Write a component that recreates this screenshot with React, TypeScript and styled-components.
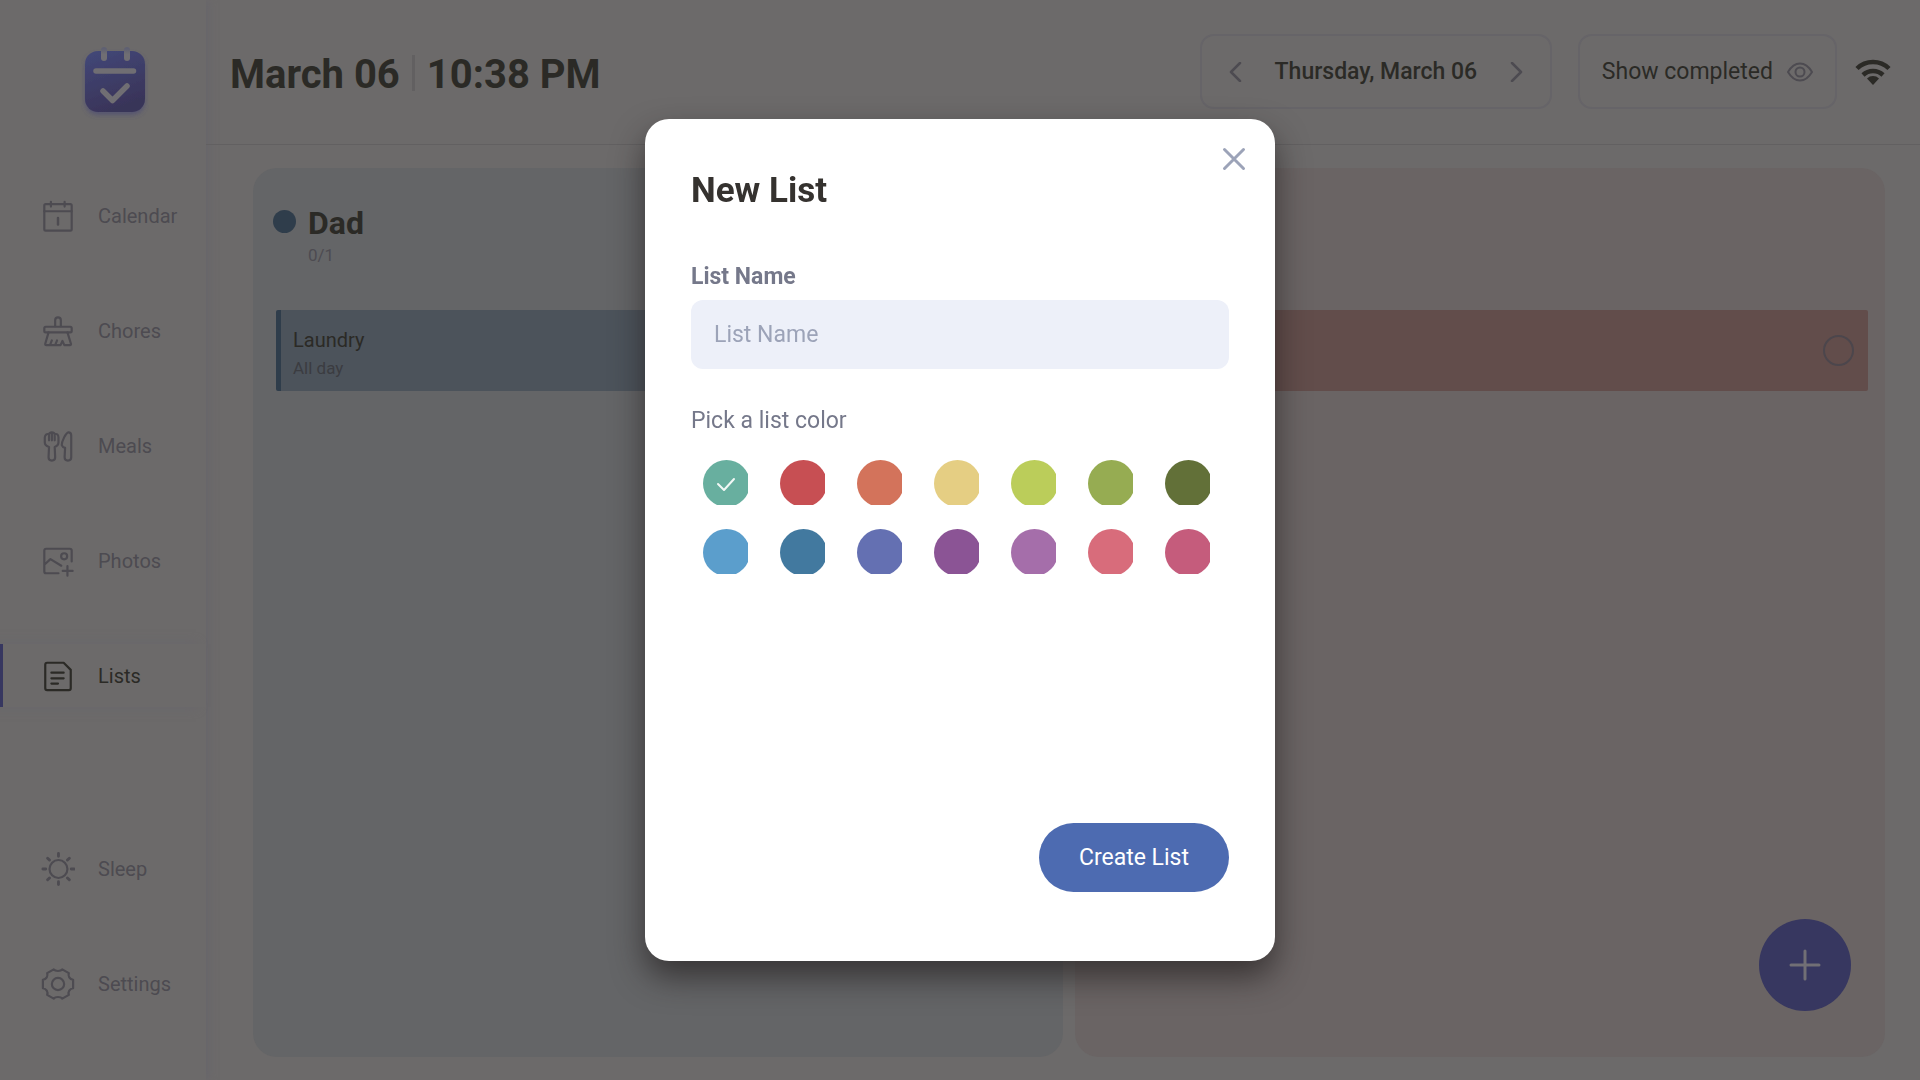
import React, { useState } from "react";
import styled, { createGlobalStyle } from "styled-components";

const color = {
  page: "#6c6a6a",
  line: "#626061",
  ink: "#2b2a26",
  muted: "#4d4b51",
  navy: "#373760",
};

const GlobalStyle = createGlobalStyle`
  *, *::before, *::after { box-sizing: border-box; }
  html, body, #root { height: 100%; }
  body {
    margin: 0;
    background: ${color.page};
    color: ${color.ink};
    font-family: Roboto, "Liberation Sans", sans-serif;
    overflow: hidden;
  }
  button, input { font: inherit; color: inherit; }
  button { border: 0; padding: 0; background: none; cursor: pointer; }
  h1, h2, h3, p, ul { margin: 0; padding: 0; }
  ul { list-style: none; }
`;

const Shell = styled.div`
  display: flex;
  height: 100%;
`;

const Sidebar = styled.nav`
  display: flex;
  flex-direction: column;
  flex: none;
  width: 206px;
  padding-bottom: 65px;
  box-shadow: 2px 0 8px #67656b;
`;

const LogoBox = styled.div`
  display: flex;
  justify-content: center;
  padding: 44px 0 0 24px;
  height: 184px;
`;

const NavList = styled.ul<{ $end?: boolean }>`
  display: flex;
  flex-direction: column;
  gap: 52px;
  margin-top: ${(p) => (p.$end ? "auto" : "0")};
`;

const NavLink = styled.a<{ $active?: boolean }>`
  display: flex;
  align-items: center;
  gap: 23px;
  height: 63px;
  padding-left: 38px;
  border-left: 3px solid ${(p) => (p.$active ? color.navy : "transparent")};
  box-shadow: ${(p) => (p.$active ? "-10px 0 10px #68666c" : "none")};
  color: ${(p) => (p.$active ? color.ink : color.muted)};
  font-size: 20px;
  line-height: 24px;
  text-decoration: none;

  svg { flex: none; }
`;

const Main = styled.main`
  display: flex;
  flex-direction: column;
  flex: 1;
  min-width: 0;
`;

const Header = styled.header`
  display: flex;
  align-items: center;
  justify-content: space-between;
  height: 145px;
  padding: 0 29px 1px 24px;
  border-bottom: 1px solid ${color.line};
`;

const Clock = styled.h1`
  display: flex;
  align-items: center;
  gap: 12px;
  font-size: 40px;
  line-height: 48px;
  font-weight: 700;
  padding-top: 6px;
`;

const ClockRule = styled.span`
  width: 3px;
  height: 36px;
  margin-bottom: 4px;
  background: #626061;
`;

const Tools = styled.div`
  display: flex;
  align-items: center;
  gap: 26px;
`;

const ToolBox = styled.div`
  display: flex;
  align-items: center;
  justify-content: space-between;
  width: 352px;
  height: 75px;
  padding: 0 24px;
  border: 2px solid #666468;
  border-radius: 14px;
  font-size: 23px;
  line-height: 28px;
  font-weight: 500;
`;

const ArrowButton = styled.button`
  display: flex;
  color: ${color.muted};
`;

const ToggleButton = styled.button`
  display: flex;
  align-items: center;
  gap: 14px;
  height: 75px;
  padding: 0 22px;
  border: 2px solid #666468;
  border-radius: 14px;
  font-size: 23px;
  line-height: 28px;

  svg { color: ${color.muted}; }
`;

const Network = styled.div`
  display: flex;
  margin-left: -8px;
`;

const Board = styled.div`
  display: grid;
  grid-template-columns: 1fr 1fr;
  gap: 12px;
  flex: 1;
  padding: 23px 35px 23px 47px;
`;

const Column = styled.section<{ $bg: string }>`
  padding: 36px 17px 0 20px;
  border-radius: 24px;
  background: ${(p) => p.$bg};
`;

const ColumnHead = styled.div`
  display: grid;
  grid-template-columns: 23px 1fr;
  column-gap: 12px;
  align-items: center;
  height: 106px;
  align-content: start;
`;

const Dot = styled.span<{ $bg: string }>`
  width: 23px;
  height: 23px;
  margin-bottom: 4px;
  border-radius: 50%;
  background: ${(p) => p.$bg};
`;

const ColumnTitle = styled.h2`
  font-size: 32px;
  line-height: 38px;
  font-weight: 700;
`;

const Count = styled.p`
  grid-column: 2;
  color: ${color.muted};
  font-size: 17px;
  line-height: 26px;
`;

const Task = styled.article<{ $bg: string; $edge: string }>`
  display: flex;
  align-items: center;
  justify-content: space-between;
  height: 81px;
  margin-left: 3px;
  padding: 0 14px 0 12px;
  border-left: 5px solid ${(p) => p.$edge};
  border-radius: 2px;
  background: ${(p) => p.$bg};
`;

const TaskText = styled.div`
  padding-top: 6px;
`;

const TaskName = styled.h3`
  font-size: 20px;
  line-height: 28px;
  font-weight: 400;
`;

const TaskTime = styled.p`
  color: #3b3c41;
  font-size: 17px;
  line-height: 28px;
`;

const DoneBox = styled.input`
  appearance: none;
  width: 31px;
  height: 31px;
  margin: 0;
  border: 2px solid #4c464c;
  border-radius: 50%;
`;

const AddButton = styled.button`
  position: fixed;
  right: 69px;
  bottom: 69px;
  display: flex;
  align-items: center;
  justify-content: center;
  width: 92px;
  height: 92px;
  border-radius: 50%;
  background: ${color.navy};
  color: #716f75;
`;

const Layer = styled.div`
  position: fixed;
  inset: 0;
  display: flex;
  align-items: center;
  justify-content: center;
`;

const Dialog = styled.form`
  position: relative;
  display: flex;
  flex-direction: column;
  width: 630px;
  min-height: 842px;
  padding: 51px 46px 69px;
  border-radius: 24px;
  background: #fff;
  box-shadow: 0 16px 32px 0 rgba(30, 26, 26, 0.65);
`;

const CloseButton = styled.button`
  position: absolute;
  top: 25px;
  right: 26px;
  display: flex;
  color: #9ca3b8;
`;

const DialogTitle = styled.h2`
  color: #35322f;
  font-size: 35px;
  line-height: 42px;
  font-weight: 700;
`;

const FieldLabel = styled.label`
  margin-top: 50px;
  color: #75788a;
  font-size: 23px;
  line-height: 30px;
  font-weight: 700;
`;

const TextField = styled.input`
  height: 69px;
  margin-top: 8px;
  padding: 0 23px;
  border: 0;
  border-radius: 12px;
  background: #edf0f9;
  color: #35322f;
  font-size: 23px;
  line-height: 28px;
  outline: none;

  &::placeholder { color: #9ca3b8; opacity: 1; }
`;

const Swatches = styled.fieldset`
  min-width: 0;
  margin: 37px 0 0;
  padding: 0;
  border: 0;
`;

const SwatchLegend = styled.legend`
  padding: 0;
  color: #75788a;
  font-size: 23px;
  line-height: 30px;
`;

const SwatchGrid = styled.div`
  display: grid;
  grid-template-columns: repeat(7, 45px);
  gap: 24px 32px;
  padding: 24px 0 0 12px;
`;

const Swatch = styled.label<{ $bg: string }>`
  display: grid;
  grid-template: 45px / 45px;
  overflow: hidden;
  color: #f2f8f6;
  cursor: pointer;

  input {
    grid-area: 1 / 1;
    appearance: none;
    width: 47px;
    height: 47px;
    margin: 0;
    border-radius: 50%;
    background: ${(p) => p.$bg};
  }
  svg { grid-area: 1 / 1; place-self: center; z-index: 1; }
`;

const SubmitButton = styled.button`
  align-self: flex-end;
  height: 69px;
  margin-top: auto;
  padding: 0 40px;
  border-radius: 35px;
  background: #4d6bb1;
  color: #fff;
  font-size: 23px;
  line-height: 28px;
`;

const Svg = ({ size = 36, sw = 2, box = 36, children }: { size?: number; sw?: number; box?: number; children: React.ReactNode }) => (
  <svg width={size} height={size} viewBox={`0 0 ${box} ${box}`} fill="none" stroke="currentColor" strokeWidth={sw} strokeLinecap="round" strokeLinejoin="round" aria-hidden="true">
    {children}
  </svg>
);

const icons = {
  calendar: (
    <>
      <rect x="3.5" y="5.5" width="29" height="28" rx="1.5" />
      <path d="M3.5 13H32.5M10.5 3v5M25 3v5" />
      <path d="M18 20v7" strokeWidth="2.6" />
    </>
  ),
  chores: (
    <>
      <path d="M15 13V6.5a3 3 0 0 1 6 0V13" />
      <rect x="3.500" y="13.500" width="29" height="6" rx="1.5" />
      <path d="M8 19.500L4.500 31.500q-.4 1.500 1.200 1.500h15l2-4.500 2 4.500h5.800q1.600 0 1.200-1.500L28 19.500M9.500 33l2-5M15 33l2-5" />
    </>
  ),
  meals: (
    <>
      <path d="M8.500 12V5.500Q4.500 4.500 4 9v5q0 3.500 4.500 5L8 30q0 3.500 3.500 3.500T15 30l-.5-11q4-1.500 4-5V9q-.2-4.500-4-3.500V12M11.500 12V5M8.500 5.500Q9 3.500 11.500 3.500t3 2" />
      <path d="M32 7Q32 3.500 29 3.500C26 4.500 22 13 22 17q1 2.500 3.500 3L25 30q0 3.500 3.500 3.500T32 30z" />
    </>
  ),
  photos: (
    <>
      <path d="M18.500 31H5.500q-2 0-2-2V7q0-2 2-2h25q2 0 2 2v11.500M3.500 22L10 16l11.500 7" />
      <circle cx="24.500" cy="13" r="3.200" />
      <path d="M28 23.500v10M23 28.500h10.500" />
    </>
  ),
  lists: (
    <>
      <path d="M6.500 4H24l7.500 7.500V31q0 2-2 2h-23q-2 0-2-2V6q0-2 2-2z" />
      <path d="M11 14.500h13M11 20.500h13M11 26h7" />
    </>
  ),
  sleep: (
    <>
      <circle cx="18.500" cy="18" r="9.500" />
      <path strokeWidth="3" d="M18.500 1.500v3M18.500 31.500v3M2 18h3M32 18h3M7 6.500l2 2M28 27.500l2 2M7 29.500l2-2M28 8.500l2-2" />
    </>
  ),
  settings: (
    <>
      <circle cx="18" cy="18" r="6.500" />
      <path d="M13.500 2.500c1.500 2.300 7.500 2.300 9 0l7 4c-1.200 3 .8 6.500 4.500 7v9c-3.700.5-5.700 4-4.500 7l-7 4c-1.500-2.300-7.500-2.300-9 0l-7-4c1.200-3-.8-6.500-4.500-7v-9c3.700-.5 5.700-4 4.500-7z" />
    </>
  ),
};

type IconName = keyof typeof icons;

const mainNav: { id: IconName; label: string }[] = [
  { id: "calendar", label: "Calendar" },
  { id: "chores", label: "Chores" },
  { id: "meals", label: "Meals" },
  { id: "photos", label: "Photos" },
  { id: "lists", label: "Lists" },
];

const systemNav: { id: IconName; label: string }[] = [
  { id: "sleep", label: "Sleep" },
  { id: "settings", label: "Settings" },
];

const palette = [
  ["Teal", "#68af9f"], ["Red", "#c74f53"], ["Orange", "#d3735b"], ["Yellow", "#e5ce83"],
  ["Lime", "#bbcd5a"], ["Green", "#96ac52"], ["Olive", "#627038"], ["Sky", "#5b9ecc"],
  ["Blue", "#42799f"], ["Indigo", "#6470b2"], ["Purple", "#8b5495"], ["Orchid", "#a56eaa"],
  ["Coral", "#d86c7b"], ["Rose", "#c55c7c"],
];

const Logo = () => (
  <svg width="68" height="80" viewBox="0 0 68 80" fill="none" strokeLinecap="round" strokeLinejoin="round" role="img" aria-label="Family calendar">
    <defs>
      <linearGradient id="logo-fill" x1="0" y1="0" x2=".35" y2="1">
        <stop offset="0" stopColor="#434879" />
        <stop offset="1" stopColor="#393459" />
      </linearGradient>
      <linearGradient id="logo-ring" x1="0" y1="2" x2="0" y2="16" gradientUnits="userSpaceOnUse">
        <stop offset="0.2" stopColor="#5f6072" />
        <stop offset="0.6" stopColor="#706e73" />
      </linearGradient>
      <filter id="logo-glow" x="-20%" y="-20%" width="140%" height="150%">
        <feDropShadow dx="0" dy="3" stdDeviation="2.5" floodColor="#454575" floodOpacity=".6" />
      </filter>
    </defs>
    <rect x="4" y="7" width="60" height="61" rx="13" fill="url(#logo-fill)" filter="url(#logo-glow)" />
    <rect x="20" y="3" width="6" height="14" rx="3" fill="url(#logo-ring)" />
    <rect x="43" y="3" width="6" height="14" rx="3" fill="url(#logo-ring)" />
    <g stroke="#706e73" strokeWidth="5.5">
      <path d="M15 27h37.5" />
      <path d="M22 47l9.500 9.500L46 42" />
    </g>
  </svg>
);

const Nav = ({ items, end }: { items: typeof mainNav; end?: boolean }) => (
  <NavList $end={end}>
    {items.map((item) => (
      <li key={item.id}>
        <NavLink href={`#${item.id}`} $active={item.id === "lists"}>
          <Svg size={34} sw={2.3}>{icons[item.id]}</Svg>
          {item.label}
        </NavLink>
      </li>
    ))}
  </NavList>
);

export default function App() {
  const [picked, setPicked] = useState("Teal");
  const [name, setName] = useState("");

  return (
    <>
      <GlobalStyle />
      <Shell>
        <Sidebar>
          <LogoBox><Logo /></LogoBox>
          <Nav items={mainNav} />
          <Nav items={systemNav} end />
        </Sidebar>
        <Main>
          <Header>
            <Clock>
              <span>March 06</span>
              <ClockRule />
              <span>10:38 PM</span>
            </Clock>
            <Tools>
              <ToolBox>
                <ArrowButton aria-label="Previous day"><Svg size={20} box={20} sw={2.5}><path d="M14 1L5 10l9 9" /></Svg></ArrowButton>
                <span>Thursday, March 06</span>
                <ArrowButton aria-label="Next day"><Svg size={20} box={20} sw={2.5}><path d="M6 1l9 9-9 9" /></Svg></ArrowButton>
              </ToolBox>
              <ToggleButton>
                Show completed
                <Svg size={26} box={26}>
                  <path d="M1 13Q6 4.500 13 4.500T25 13q-5 8.500-12 8.500T1 13z" />
                  <circle cx="13" cy="13" r="4.5" />
                </Svg>
              </ToggleButton>
              <Network>
                <svg width="36" height="28" viewBox="0 0 36 28" fill="none" stroke={color.ink} strokeWidth="4.5" role="img" aria-label="Wi-Fi connected">
                  <path d="M2 10.500a23 23 0 0 1 32 0M8 17a14.500 14.500 0 0 1 20 0" />
                  <path d="M18 27l-6-6.500a8.500 8.500 0 0 1 12 0z" fill={color.ink} stroke="none" />
                </svg>
              </Network>
            </Tools>
          </Header>
          <Board>
            <Column $bg="#646567">
              <ColumnHead>
                <Dot $bg="#2f3d4b" />
                <ColumnTitle>Dad</ColumnTitle>
                <Count>0/1</Count>
              </ColumnHead>
              <Task $bg="#4c535b" $edge="#2f3d4b">
                <TaskText>
                  <TaskName>Laundry</TaskName>
                  <TaskTime>All day</TaskTime>
                </TaskText>
              </Task>
            </Column>
            <Column $bg="#6a6464">
              <ColumnHead />
              <Task $bg="#624d4b" $edge="#5a3533">
                <span />
                <DoneBox type="checkbox" aria-label="Mark task as done" />
              </Task>
            </Column>
          </Board>
        </Main>
      </Shell>
      <AddButton aria-label="Add">
        <Svg size={32} box={32} sw={3}><path d="M16 2v28M2 16h28" /></Svg>
      </AddButton>
      <Layer>
        <Dialog role="dialog" aria-modal="true" aria-labelledby="dialog-title" onSubmit={(e) => e.preventDefault()}>
          <CloseButton type="button" aria-label="Close">
            <Svg size={30} box={30} sw={3}><path d="M5.500 5.500l19 19M24.500 5.500l-19 19" /></Svg>
          </CloseButton>
          <DialogTitle id="dialog-title">New List</DialogTitle>
          <FieldLabel htmlFor="list-name">List Name</FieldLabel>
          <TextField id="list-name" placeholder="List Name" value={name} onChange={(e) => setName(e.target.value)} />
          <Swatches>
            <SwatchLegend>Pick a list color</SwatchLegend>
            <SwatchGrid>
              {palette.map(([label, value]) => (
                <Swatch key={label} $bg={value}>
                  <input type="radio" name="list-color" aria-label={label} checked={picked === label} onChange={() => setPicked(label)} />
                  {picked === label && <Svg size={20} box={20}><path d="M2 11l6 6L18 6" /></Svg>}
                </Swatch>
              ))}
            </SwatchGrid>
          </Swatches>
          <SubmitButton type="submit">Create List</SubmitButton>
        </Dialog>
      </Layer>
    </>
  );
}
